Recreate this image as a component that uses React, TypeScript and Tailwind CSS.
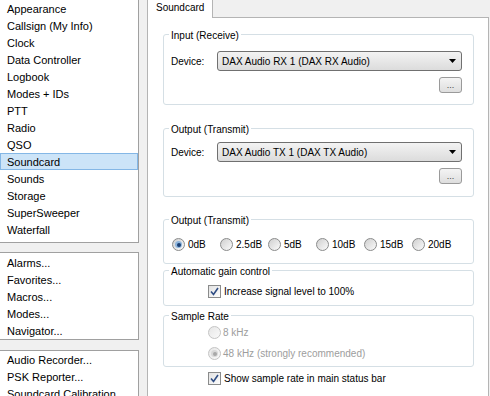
import React from 'react';

const mainItems = [
  'Appearance',
  'Callsign (My Info)',
  'Clock',
  'Data Controller',
  'Logbook',
  'Modes + IDs',
  'PTT',
  'Radio',
  'QSO',
  'Soundcard',
  'Sounds',
  'Storage',
  'SuperSweeper',
  'Waterfall',
];
const dialogItems = ['Alarms...', 'Favorites...', 'Macros...', 'Modes...', 'Navigator...'];
const toolItems = ['Audio Recorder...', 'PSK Reporter...', 'Soundcard Calibration'];
const levels = ['0dB', '2.5dB', '5dB', '10dB', '15dB', '20dB'];

const Row = ({ label, selected }: { label: string; selected?: boolean }) => (
  <div
    className={`h-[17px] border pl-[6px] leading-[16px] ${
      selected ? 'border-[#84b7e6] bg-[#cce4f8]' : 'border-transparent'
    }`}
  >
    {label}
  </div>
);

const Legend = ({ children }: { children: React.ReactNode }) => (
  <legend className="ml-[5px] px-[2px] leading-[12px]">
    <span className="relative top-[2px]">{children}</span>
  </legend>
);

const Radio = ({ checked, disabled }: { checked?: boolean; disabled?: boolean }) => (
  <span
    className={`flex h-[13px] w-[13px] shrink-0 items-center justify-center rounded-full border ${
      disabled
        ? 'border-[#c4c4c4] bg-gradient-to-br from-[#e6e6e6] to-[#fafafa]'
        : 'border-[#8a8b8b] bg-gradient-to-br from-[#cfcfcf] to-[#fbfbfb]'
    }`}
  >
    {checked && (
      <span
        className={`flex h-[7px] w-[7px] items-center justify-center rounded-full ${
          disabled ? 'bg-[#d8d8d8]' : 'bg-[#8fb6dd]'
        }`}
      >
        <span className={`h-[4px] w-[4px] rounded-full ${disabled ? 'bg-[#a8a8a8]' : 'bg-[#1b3f73]'}`} />
      </span>
    )}
  </span>
);

const Check = () => (
  <span className="flex h-[13px] w-[13px] shrink-0 items-center justify-center border border-[#8a8b8b] bg-gradient-to-br from-[#e2e2e2] to-[#fdfdfd]">
    <svg width="9" height="9" viewBox="0 0 9 9">
      <path d="M1 4.5 L3.5 7.5 L8 1" fill="none" stroke="#2f4d84" strokeWidth="1.6" />
    </svg>
  </span>
);

const DeviceGroup = ({ title, device, pt, pb }: { title: string; device: string; pt: string; pb: string }) => (
  <fieldset className={`w-[311px] rounded-[3px] border border-[#d5dfe5] ${pt} ${pb}`}>
    <Legend>{title}</Legend>
    <div className="flex items-center pl-[7px]">
      <span className="w-[46px]">Device:</span>
      <div className="flex h-[20px] w-[245px] items-center justify-between rounded-[3px] border border-[#707070] bg-gradient-to-b from-[#f3f3f3] to-[#dcdcdc] pl-[4px] pr-[5px]">
        <span>{device}</span>
        <svg width="7" height="4" viewBox="0 0 7 4">
          <path d="M0 0 H7 L3.5 4 Z" fill="#000" />
        </svg>
      </div>
    </div>
    <div className="mt-[6px] flex justify-end pr-[11px]">
      <div className="flex h-[16px] w-[23px] items-end justify-center rounded-[3px] border border-[#9a9a9a] bg-gradient-to-b from-[#f4f4f4] to-[#dedede] pb-[2px] text-[9px] leading-[9px] text-[#444]">
        ...
      </div>
    </div>
  </fieldset>
);

export default function App() {
  return (
    <div className="flex h-[396px] w-[490px] overflow-hidden bg-[#f0f0f0] font-['Liberation_Sans',Arial,sans-serif] text-black">
      <div className="flex w-[139px] shrink-0 flex-col text-[11px]">
        <div className="h-[243px] border-b border-r border-[#a0a0a0] bg-white pb-[4px]">
          {mainItems.map((it) => (
            <Row key={it} label={it} selected={it === 'Soundcard'} />
          ))}
        </div>
        <div className="mt-[9px] h-[90px] border-b border-r border-t border-[#a0a0a0] bg-white pt-[1px]">
          {dialogItems.map((it) => (
            <Row key={it} label={it} />
          ))}
        </div>
        <div className="mt-[10px] flex-1 border-r border-t border-[#a0a0a0] bg-white">
          {toolItems.map((it) => (
            <Row key={it} label={it} />
          ))}
        </div>
      </div>

      <div className="ml-[8px] flex w-[342px] shrink-0 flex-col text-[10px]">
        <div className="flex h-[18px]">
          <div className="w-[66px] border-l border-r border-[#b4b4b4] bg-white pl-[8px] pt-[2px] leading-[12px]">
            Soundcard
          </div>
          <div className="flex-1 border-b border-[#b4b4b4]" />
        </div>
        <div className="flex flex-1 flex-col border-l border-r border-[#b4b4b4] bg-white pl-[15px] pt-[10px]">
          <DeviceGroup title="Input (Receive)" device="DAX Audio RX 1 (DAX RX Audio)" pt="pt-[11px]" pb="pb-[11px]" />
          <div className="mt-[17px]">
            <DeviceGroup title="Output (Transmit)" device="DAX Audio TX 1 (DAX TX Audio)" pt="pt-[8px]" pb="pb-[12px]" />
          </div>

          <fieldset className="mt-[16px] w-[311px] rounded-[3px] border border-[#d5dfe5] pb-[12px] pt-[13px]">
            <Legend>Output (Transmit)</Legend>
            <div className="flex pl-[8px]">
              {levels.map((l, i) => (
                <div key={l} className="flex h-[13px] w-[48px] items-center gap-[3px]">
                  <Radio checked={i === 0} />
                  <span className="leading-[12px]">{l}</span>
                </div>
              ))}
            </div>
          </fieldset>

          <fieldset className="w-[311px] rounded-[3px] border border-[#d5dfe5] pb-[7px] pt-[9px]">
            <Legend>Automatic gain control</Legend>
            <div className="flex h-[13px] items-center gap-[3px] pl-[44px]">
              <Check />
              <span className="leading-[12px]">Increase signal level to 100%</span>
            </div>
          </fieldset>

          <fieldset className="mt-[3px] w-[311px] rounded-[3px] border border-[#d5dfe5] pb-[6px] pt-[5px]">
            <Legend>Sample Rate</Legend>
            <div className="flex flex-col gap-[8px] pl-[44px] text-[#9d9d9d]">
              <div className="flex h-[13px] items-center gap-[2px]">
                <Radio disabled />
                <span className="leading-[12px]">8 kHz</span>
              </div>
              <div className="flex h-[13px] items-center gap-[2px]">
                <Radio checked disabled />
                <span className="leading-[12px]">48 kHz (strongly recommended)</span>
              </div>
            </div>
          </fieldset>

          <div className="mt-[5px] flex h-[13px] items-center gap-[3px] pl-[45px]">
            <Check />
            <span className="leading-[12px]">Show sample rate in main status bar</span>
          </div>
        </div>
      </div>
    </div>
  );
}
